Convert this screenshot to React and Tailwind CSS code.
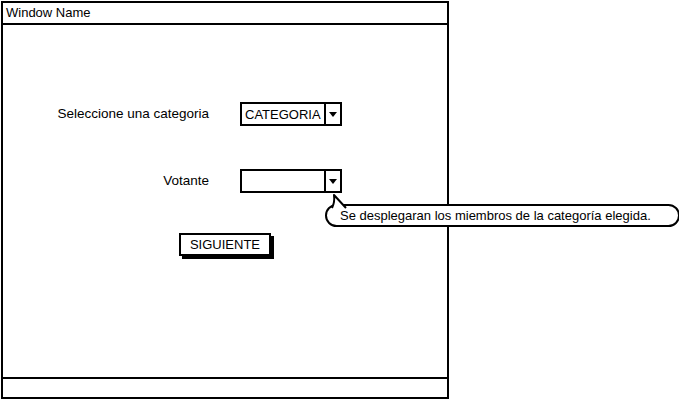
import React from "react";

const Dropdown = ({ value = "", children }) => (
  <div className="relative flex h-[24px] w-[102px] border-2 border-black bg-white">
    <div className="flex flex-1 items-center pl-[3px] text-[13px] leading-none text-black">
      {value}
    </div>
    <div className="flex w-[16px] items-center justify-center border-l-2 border-black">
      <svg width="8" height="5" viewBox="0 0 8 5">
        <path d="M0 0 L8 0 L4 5 Z" fill="#000" />
      </svg>
    </div>
    {children}
  </div>
);

// speech-bubble note under the Votante dropdown
const Callout = ({ text }) => (
  <div className="absolute left-[83px] top-[33px] z-10 flex h-[23px] w-[355px] items-center rounded-full border-2 border-black bg-white pl-[13px] text-[13px] leading-none text-black">
    <svg
      className="absolute left-[2px] top-[-13px]"
      width="20"
      height="16"
      viewBox="0 0 20 16"
    >
      <path
        d="M3 15 Q6 9 5 2 L17 15"
        fill="#fff"
        stroke="#000"
        strokeWidth="2"
        strokeLinejoin="round"
      />
    </svg>
    <span className="whitespace-nowrap">{text}</span>
  </div>
);

export default function App() {
  return (
    <div
      className="h-[400px] w-[679px] overflow-hidden bg-white pl-[1px] pt-[1px]"
      style={{ fontFamily: '"Liberation Sans", Arial, sans-serif' }}
    >
      <div className="flex h-[398px] w-[448px] flex-col border-2 border-black bg-white">
        {/* title bar */}
        <div className="flex h-[22px] items-center border-b-2 border-black pl-[3px] text-[13px] text-black">
          Window Name
        </div>

        {/* body */}
        <div className="flex flex-1 flex-col pt-[77px]">
          <div className="flex items-center">
            <div className="w-[206px] text-right text-[13.5px] text-black">
              Seleccione una categoria
            </div>
            <div className="ml-[31px]">
              <Dropdown value="CATEGORIA" />
            </div>
          </div>

          <div className="mt-[43px] flex items-center">
            <div className="w-[206px] text-right text-[13.5px] text-black">
              Votante
            </div>
            <div className="ml-[31px]">
              <Dropdown>
                <Callout text="Se desplegaran los miembros de la categoría elegida." />
              </Dropdown>
            </div>
          </div>

          <div className="mt-[40px] flex justify-center">
            <button className="flex h-[23px] w-[92px] items-center justify-center border-2 border-black bg-white text-[13px] leading-none text-black shadow-[3px_3px_0_#000]">
              SIGUIENTE
            </button>
          </div>
        </div>

        {/* status bar */}
        <div className="h-[20px] border-t-2 border-black" />
      </div>
    </div>
  );
}
